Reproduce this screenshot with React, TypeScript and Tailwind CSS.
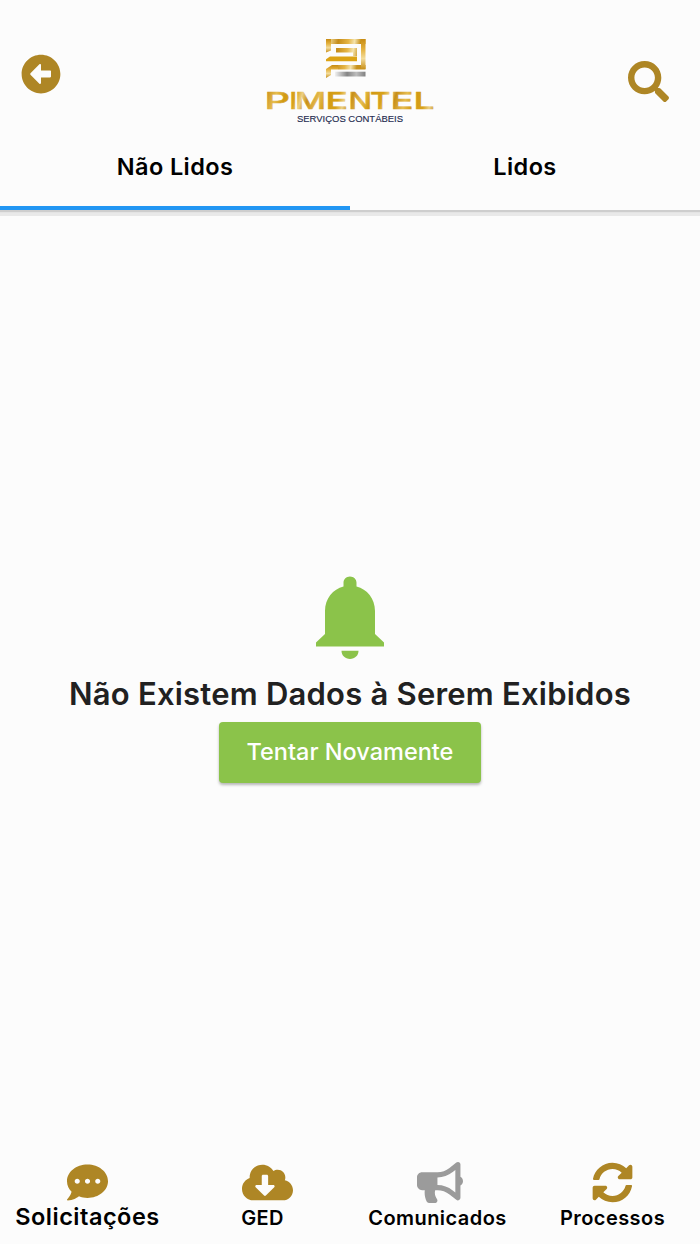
import type { FC } from "react";
import type { IconType } from "react-icons";
import {
    FaArrowAltCircleLeft,
    FaBullhorn,
    FaCloudDownloadAlt,
    FaCommentDots,
    FaSearch,
    FaSyncAlt,
} from "react-icons/fa";

type NavItem = {
    label: string;
    icon: IconType;
    iconClassName: string;
    labelClassName: string;
};

const navItems: NavItem[] = [
    {
        label: "Solicitações",
        icon: FaCommentDots,
        iconClassName: "text-[#ae8625]",
        labelClassName: "text-[23.5px] tracking-[0.5px]",
    },
    {
        label: "GED",
        icon: FaCloudDownloadAlt,
        iconClassName: "ml-2.5 w-[51px] text-[#ae8625]",
        labelClassName: "mt-px text-[20px] tracking-[0.3px]",
    },
    {
        label: "Comunicados",
        icon: FaBullhorn,
        iconClassName: "ml-1 w-[46px] text-[#9b9b9b]",
        labelClassName: "mt-px text-[20px] tracking-[0.45px]",
    },
    {
        label: "Processos",
        icon: FaSyncAlt,
        iconClassName: "text-[#ae8625]",
        labelClassName: "mt-px text-[20px] tracking-[0.45px]",
    },
];

// every letter of the wordmark is stretched to its own width
const wordmark = [
    { letter: "P", x: 264.5, width: 25.5 },
    { letter: "I", x: 289.5, width: 7.5 },
    { letter: "M", x: 295, width: 31 },
    { letter: "E", x: 325.5, width: 22.5 },
    { letter: "N", x: 348.5, width: 23.5 },
    { letter: "T", x: 370, width: 20.5 },
    { letter: "E", x: 390.5, width: 23 },
    { letter: "L", x: 413.5, width: 21 },
];

const Logo: FC = () => (
    <svg width="172" height="90" viewBox="264 36 172 90">
        <defs>
            <linearGradient id="gold" x1="326" x2="366" y1="0" y2="6" gradientUnits="userSpaceOnUse">
                <stop offset="0" stopColor="#c68a16" />
                <stop offset="0.2" stopColor="#f2dfa0" />
                <stop offset="0.45" stopColor="#c58c19" />
                <stop offset="0.7" stopColor="#e5b545" />
                <stop offset="0.85" stopColor="#f4e3ad" />
                <stop offset="1" stopColor="#c8921c" />
            </linearGradient>
            <linearGradient id="column" x1="0" x2="0" y1="0" y2="1">
                <stop offset="0" stopColor="#c78b12" />
                <stop offset="0.35" stopColor="#e5b340" />
                <stop offset="0.65" stopColor="#f3dc9b" />
                <stop offset="1" stopColor="#c9901a" />
            </linearGradient>
            <linearGradient id="silver">
                <stop offset="0" stopColor="#f1f1f1" />
                <stop offset="0.4" stopColor="#858585" />
                <stop offset="0.7" stopColor="#bdbdbd" />
                <stop offset="1" stopColor="#808080" />
            </linearGradient>
            <linearGradient
                id="word"
                x1="266"
                x2="306"
                y1="92"
                y2="104"
                gradientUnits="userSpaceOnUse"
                spreadMethod="repeat"
            >
                <stop offset="0" stopColor="#c88f18" />
                <stop offset="0.25" stopColor="#e6bd50" />
                <stop offset="0.45" stopColor="#d29a12" />
                <stop offset="0.7" stopColor="#d8a21b" />
                <stop offset="0.85" stopColor="#ecd084" />
                <stop offset="1" stopColor="#c88f18" />
            </linearGradient>
        </defs>
        <path fill="url(#gold)" d="M326 39h39.500v5H326z M336 48h21v8h-4v-3.500h-17z M338 65h27.500v4.500h-27.500z" />
        <path fill="#dca315" d="M330 56.500h27v4.700h-31v-2z" />
        <path fill="url(#column)" d="M326 39h5v11.500l-5 2z" />
        <path fill="url(#column)" d="M361 39h4.500v30h-4.500z" />
        <path fill="url(#column)" d="M332 65h6v4.500h-7v5.500l-5 3v-9z" />
        <path fill="url(#silver)" d="M335 71.700h30.500v4.800h-30.500z" />
        {wordmark.map(({ letter, x, width }) => (
            <text
                key={x}
                x={x}
                y="108.500"
                fill="url(#word)"
                stroke="url(#word)"
                strokeWidth="0.5"
                fontSize="22.500"
                textLength={width}
                lengthAdjust="spacingAndGlyphs"
                className="font-['Inter',sans-serif] font-medium"
            >
                {letter}
            </text>
        ))}
        <text
            x="297"
            y="122"
            fill="#1f2c50"
            stroke="#1f2c50"
            strokeWidth="0.15"
            fontSize="9.500"
            textLength="106"
            lengthAdjust="spacingAndGlyphs"
            className="font-['Liberation_Sans',sans-serif]"
        >
            SERVIÇOS CONTÁBEIS
        </text>
    </svg>
);

const BellIcon: FC = () => (
    <svg width="68" height="83" viewBox="0 0 68 83" fill="#8bc34a">
        <path d="M34 0.500c-3.700 0-6.500 2.800-6.500 6.300V10.500C17 13 9 22.500 9 35v23L0 66.500v4h68v-4L59 58V35C59 22.500 51 13 40.500 10.500V6.800C40.500 3.300 37.700 0.500 34 0.500z" />
        <path d="M25.500 74.700h17c0 4.700-3.600 8.200-8.500 8.200s-8.500-3.500-8.500-8.200z" />
    </svg>
);

const App: FC = () => {
    return (
        <div className="flex h-[1244px] w-[700px] flex-col overflow-hidden bg-[#fcfcfc] font-['Inter',sans-serif]">
            <header className="flex h-[210px] shrink-0 flex-col shadow-[0_1px_1px_1px_#cecece,0_3px_0_3px_#e9e9e9]">
                <div className="grid h-[126px] grid-cols-3 items-start pr-[30.5px] pl-[20.5px]">
                    <button className="mt-[54px] text-[#ae8625]" aria-label="Voltar">
                        <FaArrowAltCircleLeft size={40} />
                    </button>
                    <div className="mt-9 ml-2.5 justify-self-center">
                        <Logo />
                    </div>
                    <button className="mt-[60.5px] justify-self-end text-[#ae8625]" aria-label="Pesquisar">
                        <FaSearch size={41} />
                    </button>
                </div>
                <div className="grid flex-1 grid-cols-2 text-center text-[23.5px] font-semibold text-black">
                    <button className="border-b-4 border-[#2196f3] pt-0.5 tracking-[0.4px]">Não Lidos</button>
                    <button className="border-b-4 border-transparent pt-0.5 tracking-[0.4px]">Lidos</button>
                </div>
            </header>

            <main className="flex flex-1 flex-col items-center pt-[366px]">
                <BellIcon />
                <h1 className="mt-[15px] text-[31px] leading-10 font-semibold tracking-[0.22px] whitespace-nowrap text-[#212121]">
                    Não Existem Dados à Serem Exibidos
                </h1>
                <button className="mt-[7.5px] h-[61px] w-[262px] rounded-[4px] bg-[#8bc34a] pb-px text-[23.5px] font-medium text-white shadow-[0_2px_3px_rgba(0,0,0,0.28)]">
                    Tentar Novamente
                </button>
            </main>

            <nav className="grid h-[84px] shrink-0 grid-cols-4">
                {navItems.map(({ label, icon: Icon, iconClassName, labelClassName }) => (
                    <button key={label} className="flex flex-col items-center pt-[2px] font-semibold text-black">
                        <Icon size={41} className={iconClassName} />
                        <span className={`leading-7 ${labelClassName}`}>{label}</span>
                    </button>
                ))}
            </nav>
        </div>
    );
};

export default App;
